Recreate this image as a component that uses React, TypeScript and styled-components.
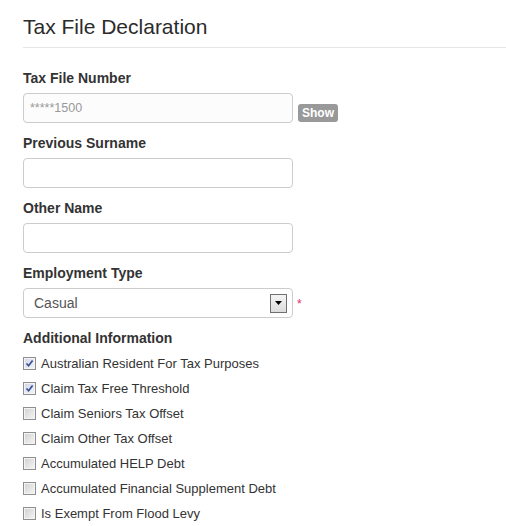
import React from "react";
import styled, { createGlobalStyle } from "styled-components";

const GlobalStyle = createGlobalStyle`
  html, body {
    margin: 0;
    padding: 0;
    background: #ffffff;
  }
  body {
    font-family: "Liberation Sans", Arial, Helvetica, sans-serif;
    color: #333333;
  }
`;

const Page = styled.div`
  padding-left: 23px;
`;

const Title = styled.h1`
  margin: 0 0 20px 0;
  padding: 15px 0 9px 0;
  font-size: 21px;
  font-weight: normal;
  line-height: 23px;
  color: #2b2b2b;
  border-bottom: 1px solid #e6e6e6;
`;

const FormGroup = styled.div`
  margin-bottom: 10px;
`;

const FieldLabel = styled.label`
  display: block;
  font-size: 14px;
  font-weight: bold;
  line-height: 20px;
  margin-bottom: 5px;
  color: #333333;
`;

const FieldRow = styled.div`
  display: flex;
  align-items: center;
`;

const TextBox = styled.input<{ $muted?: boolean }>`
  box-sizing: border-box;
  width: 270px;
  height: 30px;
  margin: 0;
  padding: 0 6px;
  border: 1px solid #cccccc;
  border-radius: 4px;
  font-family: inherit;
  font-size: ${(p) => (p.$muted ? "12.5px" : "14px")};
  color: ${(p) => (p.$muted ? "#999999" : "#555555")};
  background-color: ${(p) => (p.$muted ? "#fcfcfc" : "#ffffff")};
  outline: none;
`;

const ShowBadge = styled.span`
  box-sizing: border-box;
  height: 18px;
  width: 40px;
  margin-left: 5px;
  align-self: flex-end;
  margin-bottom: 1px;
  display: inline-flex;
  align-items: center;
  justify-content: center;
  background: #999999;
  color: #ffffff;
  font-size: 12px;
  font-weight: bold;
  border-radius: 3px;
`;

const SelectBox = styled.div`
  box-sizing: border-box;
  width: 270px;
  height: 30px;
  display: flex;
  align-items: center;
  justify-content: space-between;
  padding: 0 5px 0 10px;
  border: 1px solid #cccccc;
  border-radius: 4px;
  background: #ffffff;
  font-size: 14px;
  color: #555555;
`;

const DropButton = styled.span`
  box-sizing: border-box;
  width: 17px;
  height: 19px;
  border: 1px solid #707070;
  background: linear-gradient(#f4f4f4, #dcdcdc);
  display: flex;
  align-items: center;
  justify-content: center;
`;

const Required = styled.span`
  margin-left: 4px;
  font-size: 12px;
  color: #e3286a;
  line-height: 1;
  padding-top: 2px;
`;

const CheckList = styled.div`
  display: flex;
  flex-direction: column;
  margin-top: -2px;
`;

const CheckRow = styled.div`
  display: flex;
  align-items: center;
  height: 25px;
  font-size: 13px;
  color: #333333;
`;

const Box = styled.span<{ $checked: boolean }>`
  box-sizing: border-box;
  width: 13px;
  height: 13px;
  margin-right: 5px;
  border: 1px solid #8e8f8f;
  box-shadow: inset 0 0 0 1px #f4f4f4;
  background: ${(p) =>
    p.$checked
      ? "linear-gradient(135deg, #cfd6e8, #f4f6fb)"
      : "linear-gradient(135deg, #d0d0d0, #f6f6f6)"};
  display: flex;
  align-items: center;
  justify-content: center;
  flex-shrink: 0;
`;

const Checkbox = ({ checked }: { checked: boolean }) => (
  <Box $checked={checked}>
    {checked && (
      <svg width="9" height="9" viewBox="0 0 9 9">
        <path
          d="M1.5 4.5 L3.6 6.8 L7.6 1.6"
          fill="none"
          stroke="#3b4f94"
          strokeWidth="1.7"
        />
      </svg>
    )}
  </Box>
);

const options: { label: string; checked: boolean }[] = [
  { label: "Australian Resident For Tax Purposes", checked: true },
  { label: "Claim Tax Free Threshold", checked: true },
  { label: "Claim Seniors Tax Offset", checked: false },
  { label: "Claim Other Tax Offset", checked: false },
  { label: "Accumulated HELP Debt", checked: false },
  { label: "Accumulated Financial Supplement Debt", checked: false },
  { label: "Is Exempt From Flood Levy", checked: false },
];

export default function App() {
  return (
    <Page>
      <GlobalStyle />
      <Title>Tax File Declaration</Title>

      <FormGroup>
        <FieldLabel>Tax File Number</FieldLabel>
        <FieldRow>
          <TextBox $muted value="*****1500" readOnly />
          <ShowBadge>Show</ShowBadge>
        </FieldRow>
      </FormGroup>

      <FormGroup>
        <FieldLabel>Previous Surname</FieldLabel>
        <FieldRow>
          <TextBox />
        </FieldRow>
      </FormGroup>

      <FormGroup>
        <FieldLabel>Other Name</FieldLabel>
        <FieldRow>
          <TextBox />
        </FieldRow>
      </FormGroup>

      <FormGroup>
        <FieldLabel>Employment Type</FieldLabel>
        <FieldRow>
          <SelectBox>
            <span>Casual</span>
            <DropButton>
              <svg width="7" height="4" viewBox="0 0 7 4">
                <path d="M0 0 H7 L3.5 4 Z" fill="#000" />
              </svg>
            </DropButton>
          </SelectBox>
          <Required>*</Required>
        </FieldRow>
      </FormGroup>

      <FormGroup>
        <FieldLabel>Additional Information</FieldLabel>
        <CheckList>
          {options.map((o) => (
            <CheckRow key={o.label}>
              <Checkbox checked={o.checked} />
              <span>{o.label}</span>
            </CheckRow>
          ))}
        </CheckList>
      </FormGroup>
    </Page>
  );
}
